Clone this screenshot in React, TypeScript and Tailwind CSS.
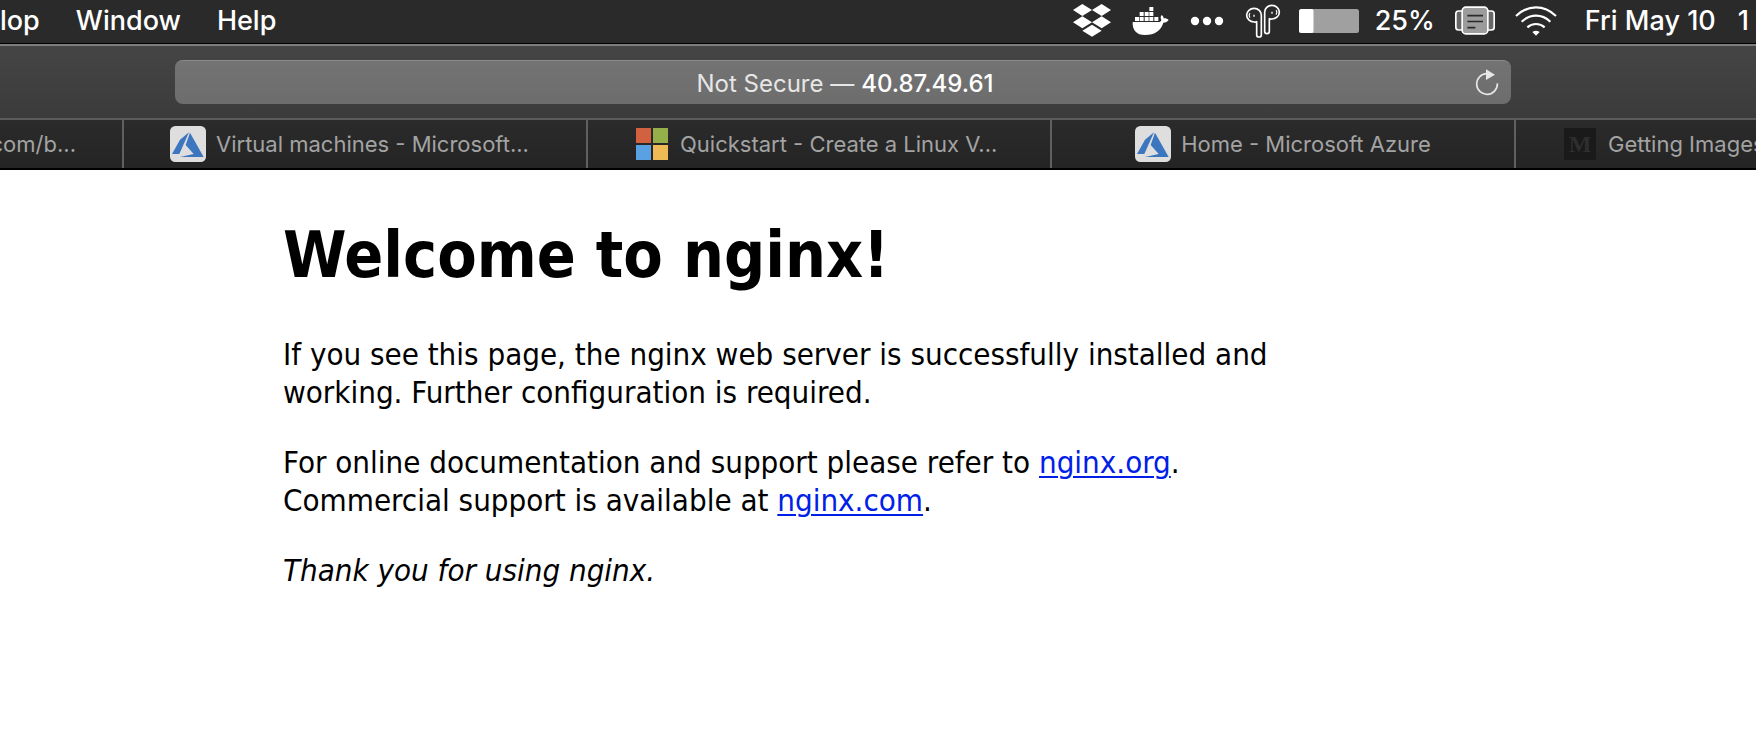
import React from "react";

function DropboxIcon() {
  return (
    <svg width="38" height="33" viewBox="0 0 114 99" fill="#fff" aria-hidden="true">
      <path d="M28 0 57 18 28 36 0 18ZM86 0 114 18 86 36 57 18ZM28 37 57 55 28 73 0 55ZM86 37 114 55 86 73 57 55ZM57 62 86 80 57 98 28 80Z" />
    </svg>
  );
}

function DockerIcon() {
  return (
    <svg width="37" height="30" viewBox="199 15 111 90" fill="#fff" aria-hidden="true">
      <path d="M251 18h12v12h-12zM222 33h12v12h-12zM237 33h12v12h-12zM251 33h12v12h-12zM208 48h12v12h-12zM222 48h12v12h-12zM237 48h12v12h-12zM251 48h12v12h-12zM266 48h12v12h-12z" />
      <path d="M201 63H281C287 62 288 58 286 54 284 50 285 46 288 42 292 45 294 48 294 52 300 51 305 53 309 57 306 62 300 65 293 65 286 88 268 102 238 102 212 102 200 88 201 63Z" />
    </svg>
  );
}

function DotsIcon() {
  return (
    <svg width="34" height="10" viewBox="0 0 34 10" fill="#fff" aria-hidden="true">
      <circle cx="5" cy="5" r="4.2" />
      <circle cx="17" cy="5" r="4.2" />
      <circle cx="29" cy="5" r="4.2" />
    </svg>
  );
}

function AirPodsIcon() {
  return (
    <svg width="36" height="36" viewBox="180 4 108 108" fill="none" stroke="#fff" strokeWidth="5" strokeLinejoin="round" aria-hidden="true">
      <path d="M215 60V99A7 7 0 0 0 229 99V41A22 20.500 0 1 0 207 61Q212 62 215 60Z" />
      <path d="M253 51V89A7 7 0 0 1 239 89V32A22 20.500 0 1 1 261 52Q256 53 253 51Z" />
      <path d="M195 34Q190 41 195 48M273 25Q278 32 273 39" strokeWidth="3.500" />
      <path d="M207 39v6M261 30v6" strokeWidth="4" />
    </svg>
  );
}

function BatteryIcon() {
  return (
    <svg width="60" height="24" viewBox="0 0 60 24" aria-hidden="true">
      <rect width="60" height="24" rx="2.500" fill="#a0a0a0" />
      <path d="M2.500 0H13Q14.500 0 14.500 2V22Q14.500 24 13 24H2.500Q0 24 0 21.500V2.500Q0 0 2.500 0Z" fill="#fff" />
    </svg>
  );
}

function CardsIcon() {
  return (
    <svg width="40" height="29" viewBox="18 16 120 87" stroke="#fff" strokeWidth="5" aria-hidden="true">
      <rect x="20.500" y="31" width="30" height="57" rx="8" fill="#666" />
      <rect x="105.500" y="31" width="30" height="57" rx="8" fill="#666" />
      <rect x="39.500" y="19.500" width="77" height="80" rx="11" fill="#9c9c9c" />
      <path d="M55 45h47M55 62.500h47M55 81h24" stroke="#2a2a2a" />
    </svg>
  );
}

function WifiIcon() {
  return (
    <svg width="42" height="30" viewBox="198 14 126 90" fill="none" stroke="#fff" strokeWidth="6.500" aria-hidden="true">
      <path d="M201 44Q228 18 261 18T321 44" />
      <path d="M218 61Q237 43 261 43T304 61" />
      <path d="M235 78Q246 68 261 68T287 78" />
      <path d="M250 92Q261 84 272 92L261 103Z" fill="#fff" stroke="none" />
    </svg>
  );
}

function ReloadIcon() {
  return (
    <svg width="24" height="27" viewBox="225 203 72 81" aria-hidden="true">
      <path d="M260 217A31 31 0 1 0 292 246" fill="none" stroke="#e6e6e6" strokeWidth="5" />
      <path d="M258 204 285 220 258 236Z" fill="#e6e6e6" />
    </svg>
  );
}

function AzureIcon() {
  return (
    <svg width="36" height="36" viewBox="60 48 108 108" className="shrink-0" aria-hidden="true">
      <rect x="60" y="48" width="108" height="108" rx="16" fill="#dedede" />
      <path d="M117 67 90 89 66 132H88Z" fill="#3b76be" />
      <path d="M120 68 161 141H90L131 132 107 105Z" fill="#3b76be" />
    </svg>
  );
}

function MicrosoftIcon() {
  return (
    <svg width="36" height="36" viewBox="0 0 36 36" className="shrink-0" aria-hidden="true">
      <path d="M2 2h15v15H2z" fill="#d2613f" />
      <path d="M19 2h15v15H19z" fill="#95b04b" />
      <path d="M2 19h15v15H2z" fill="#5aa1e3" />
      <path d="M19 19h15v15H19z" fill="#edba56" />
    </svg>
  );
}

function MediumIcon() {
  return (
    <span className="flex size-9 shrink-0 items-center justify-center">
      <span className="flex size-8 items-center justify-center bg-[#1a1a1a] font-['Liberation_Serif',serif] text-2xl font-bold text-[#2e2e2e]">
        M
      </span>
    </span>
  );
}

function Tab({ icon, title, centered = false }: { icon: React.ReactNode; title: string; centered?: boolean }) {
  return (
    <button
      type="button"
      className={`flex w-[464px] shrink-0 items-center gap-[10px] overflow-hidden border-l-2 border-[#606060] pl-[46px] whitespace-nowrap ${
        centered ? "justify-center pr-[46px]" : "justify-start"
      }`}
    >
      {icon}
      <span>{title}</span>
    </button>
  );
}

export default function App() {
  return (
    <div className="min-h-screen bg-white font-['Inter',sans-serif]">
      <header>
        <nav
          aria-label="Menu bar"
          className="flex h-[44px] items-center justify-between overflow-hidden border-b border-black bg-[#2a2a2a] pb-[2px] text-[27px] leading-[36px] font-medium whitespace-nowrap text-white"
        >
          <div className="flex gap-9">
            <button type="button">lop</button>
            <button type="button">Window</button>
            <button type="button">Help</button>
          </div>
          <div className="flex items-center pr-[7px]">
            <div className="flex items-center gap-[21px]">
              <DropboxIcon />
              <DockerIcon />
              <DotsIcon />
              <AirPodsIcon />
            </div>
            <div className="ml-[18px] flex items-center gap-4">
              <BatteryIcon />
              <span>25%</span>
            </div>
            <div className="ml-5 flex items-center gap-5">
              <CardsIcon />
              <WifiIcon />
            </div>
            <div className="ml-7 flex gap-[22px]">
              <span>Fri May 10</span>
              <span>1</span>
            </div>
          </div>
        </nav>

        <div className="flex border-t-2 border-b-2 border-t-[#7d7d7d] border-b-[#5a5a5a] bg-linear-to-b from-[#454545] to-[#3b3b3b] pt-[14px] pr-[245px] pb-[14px] pl-[175px]">
          <form
            onSubmit={(e) => e.preventDefault()}
            className="grid h-[44px] flex-1 grid-cols-[1fr_auto_1fr] items-center rounded-lg border-t border-[#8c8c8c] bg-linear-to-b from-[#737373] to-[#6d6d6d] pt-[2px] pr-3 pl-4 text-2xl"
          >
            <span />
            <div className="flex items-center gap-[7px]">
              <label htmlFor="address" className="text-[#e6e6e6]">
                Not Secure —
              </label>
              <input
                id="address"
                type="text"
                defaultValue="40.87.49.61"
                className="field-sizing-content bg-transparent font-medium text-white outline-none"
              />
            </div>
            <button type="button" aria-label="Reload" className="justify-self-end pb-[2px]">
              <ReloadIcon />
            </button>
          </form>
        </div>

        <nav
          aria-label="Tabs"
          className="flex h-[50px] overflow-hidden border-b-2 border-black bg-linear-to-b from-[#2b2b2b] to-[#242424] text-[22px] text-[#a3a3a3]"
        >
          <button type="button" className="flex w-[122px] shrink-0 items-center justify-end overflow-hidden pr-[46px] whitespace-nowrap">
            com/b...
          </button>
          <Tab icon={<AzureIcon />} title="Virtual machines - Microsoft..." />
          <Tab icon={<MicrosoftIcon />} title="Quickstart - Create a Linux V..." />
          <Tab icon={<AzureIcon />} title="Home - Microsoft Azure" centered />
          <Tab icon={<MediumIcon />} title="Getting Images" />
        </nav>
      </header>

      <main className="pr-[70px]">
        <article className="mx-auto max-w-[1120px] pt-[46px] pr-16 font-['DejaVu_Sans_Condensed','DejaVu_Sans',sans-serif] text-[31px] leading-[38px] text-black">
          <h1 className="text-[64px] leading-[78px] font-bold">Welcome to nginx!</h1>
          <p className="mt-[41px]">
            If you see this page, the nginx web server is successfully installed and working. Further configuration is required.
          </p>
          <p className="mt-8">
            For online documentation and support please refer to{" "}
            <a href="http://nginx.org/" className="text-[#0020e8] underline decoration-2 underline-offset-[3px]">nginx.org</a>.
            <br />
            Commercial support is available at{" "}
            <a href="http://nginx.com/" className="text-[#0020e8] underline decoration-2 underline-offset-[3px]">nginx.com</a>.
          </p>
          <p className="mt-8">
            <em>Thank you for using nginx.</em>
          </p>
        </article>
      </main>
    </div>
  );
}
